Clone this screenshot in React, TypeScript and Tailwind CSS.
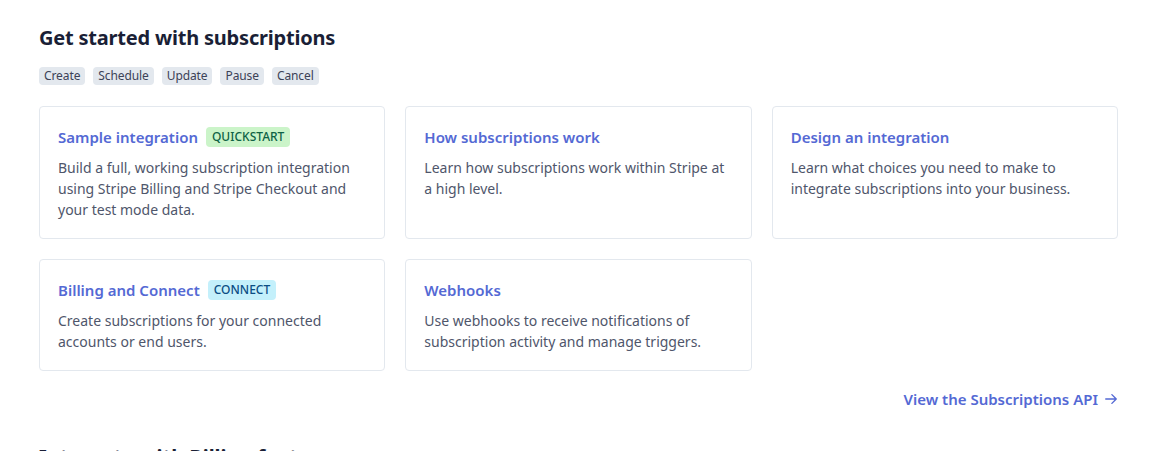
import React from 'react';

const tags = ['Create', 'Schedule', 'Update', 'Pause', 'Cancel'];

type Card = {
  title: string;
  body: string;
  badge?: { label: string; className: string };
};

const cards: Card[] = [
  {
    title: 'Sample integration',
    body: 'Build a full, working subscription integration using Stripe Billing and Stripe Checkout and your test mode data.',
    badge: { label: 'QUICKSTART', className: 'bg-[#cbf4c9] text-[#0e6245]' },
  },
  {
    title: 'How subscriptions work',
    body: 'Learn how subscriptions work within Stripe at a high level.',
  },
  {
    title: 'Design an integration',
    body: 'Learn what choices you need to make to integrate subscriptions into your business.',
  },
  {
    title: 'Billing and Connect',
    body: 'Create subscriptions for your connected accounts or end users.',
    badge: { label: 'CONNECT', className: 'bg-[#c4f0fb] text-[#0b4d84]' },
  },
  {
    title: 'Webhooks',
    body: 'Use webhooks to receive notifications of subscription activity and manage triggers.',
  },
];

export default function App() {
  return (
    <div
      className="w-[1156px] h-[451px] overflow-hidden bg-white pl-[39px] pr-[38px] pt-[24px]"
      style={{ fontFamily: '"Noto Sans", "Open Sans", sans-serif' }}
    >
      <h2 className="text-[20px] leading-[28px] font-bold text-[#1a1f36] tracking-[-0.2px]">
        Get started with subscriptions
      </h2>

      <div className="flex gap-2 mt-[15px]">
        {tags.map((t) => (
          <span
            key={t}
            className="h-[18px] px-[5px] rounded-[4px] bg-[#e3e8ee] text-[12px] leading-[18px] tracking-[-0.1px] text-[#3c4257]"
          >
            {t}
          </span>
        ))}
      </div>

      {/* Cards */}
      <div className="grid grid-cols-3 gap-5 mt-[21px]">
        {cards.map((c) => (
          <div
            key={c.title}
            className="border border-[#e3e8ee] rounded-[4px] px-[18px] pt-[19px] pb-[18px]"
          >
            <div className="flex items-center gap-2 h-[22px]">
              <span className="text-[15px] leading-[22px] font-semibold text-[#5469d4]">{c.title}</span>
              {c.badge && (
                <span
                  className={`h-[20px] px-[6px] rounded-[4px] text-[12px] leading-[20px] font-medium ${c.badge.className}`}
                >
                  {c.badge.label}
                </span>
              )}
            </div>
            <p className="mt-[9px] text-[14px] leading-[21px] text-[#4f566b]">{c.body}</p>
          </div>
        ))}
      </div>

      <div className="flex justify-end mt-[17px]">
        <a className="flex items-center gap-[6px] text-[15px] leading-[22px] font-semibold text-[#5469d4] cursor-pointer">
          View the Subscriptions API
          <svg width="14" height="14" viewBox="0 0 16 16" fill="none" stroke="currentColor" strokeWidth="1.6" strokeLinecap="round" strokeLinejoin="round">
            <path d="M2 8h12M9 3l5 5-5 5" />
          </svg>
        </a>
      </div>

      <h2 className="mt-[33px] text-[20px] leading-[28px] font-bold text-[#1a1f36]">
        Integrate with Billing features
      </h2>
    </div>
  );
}
